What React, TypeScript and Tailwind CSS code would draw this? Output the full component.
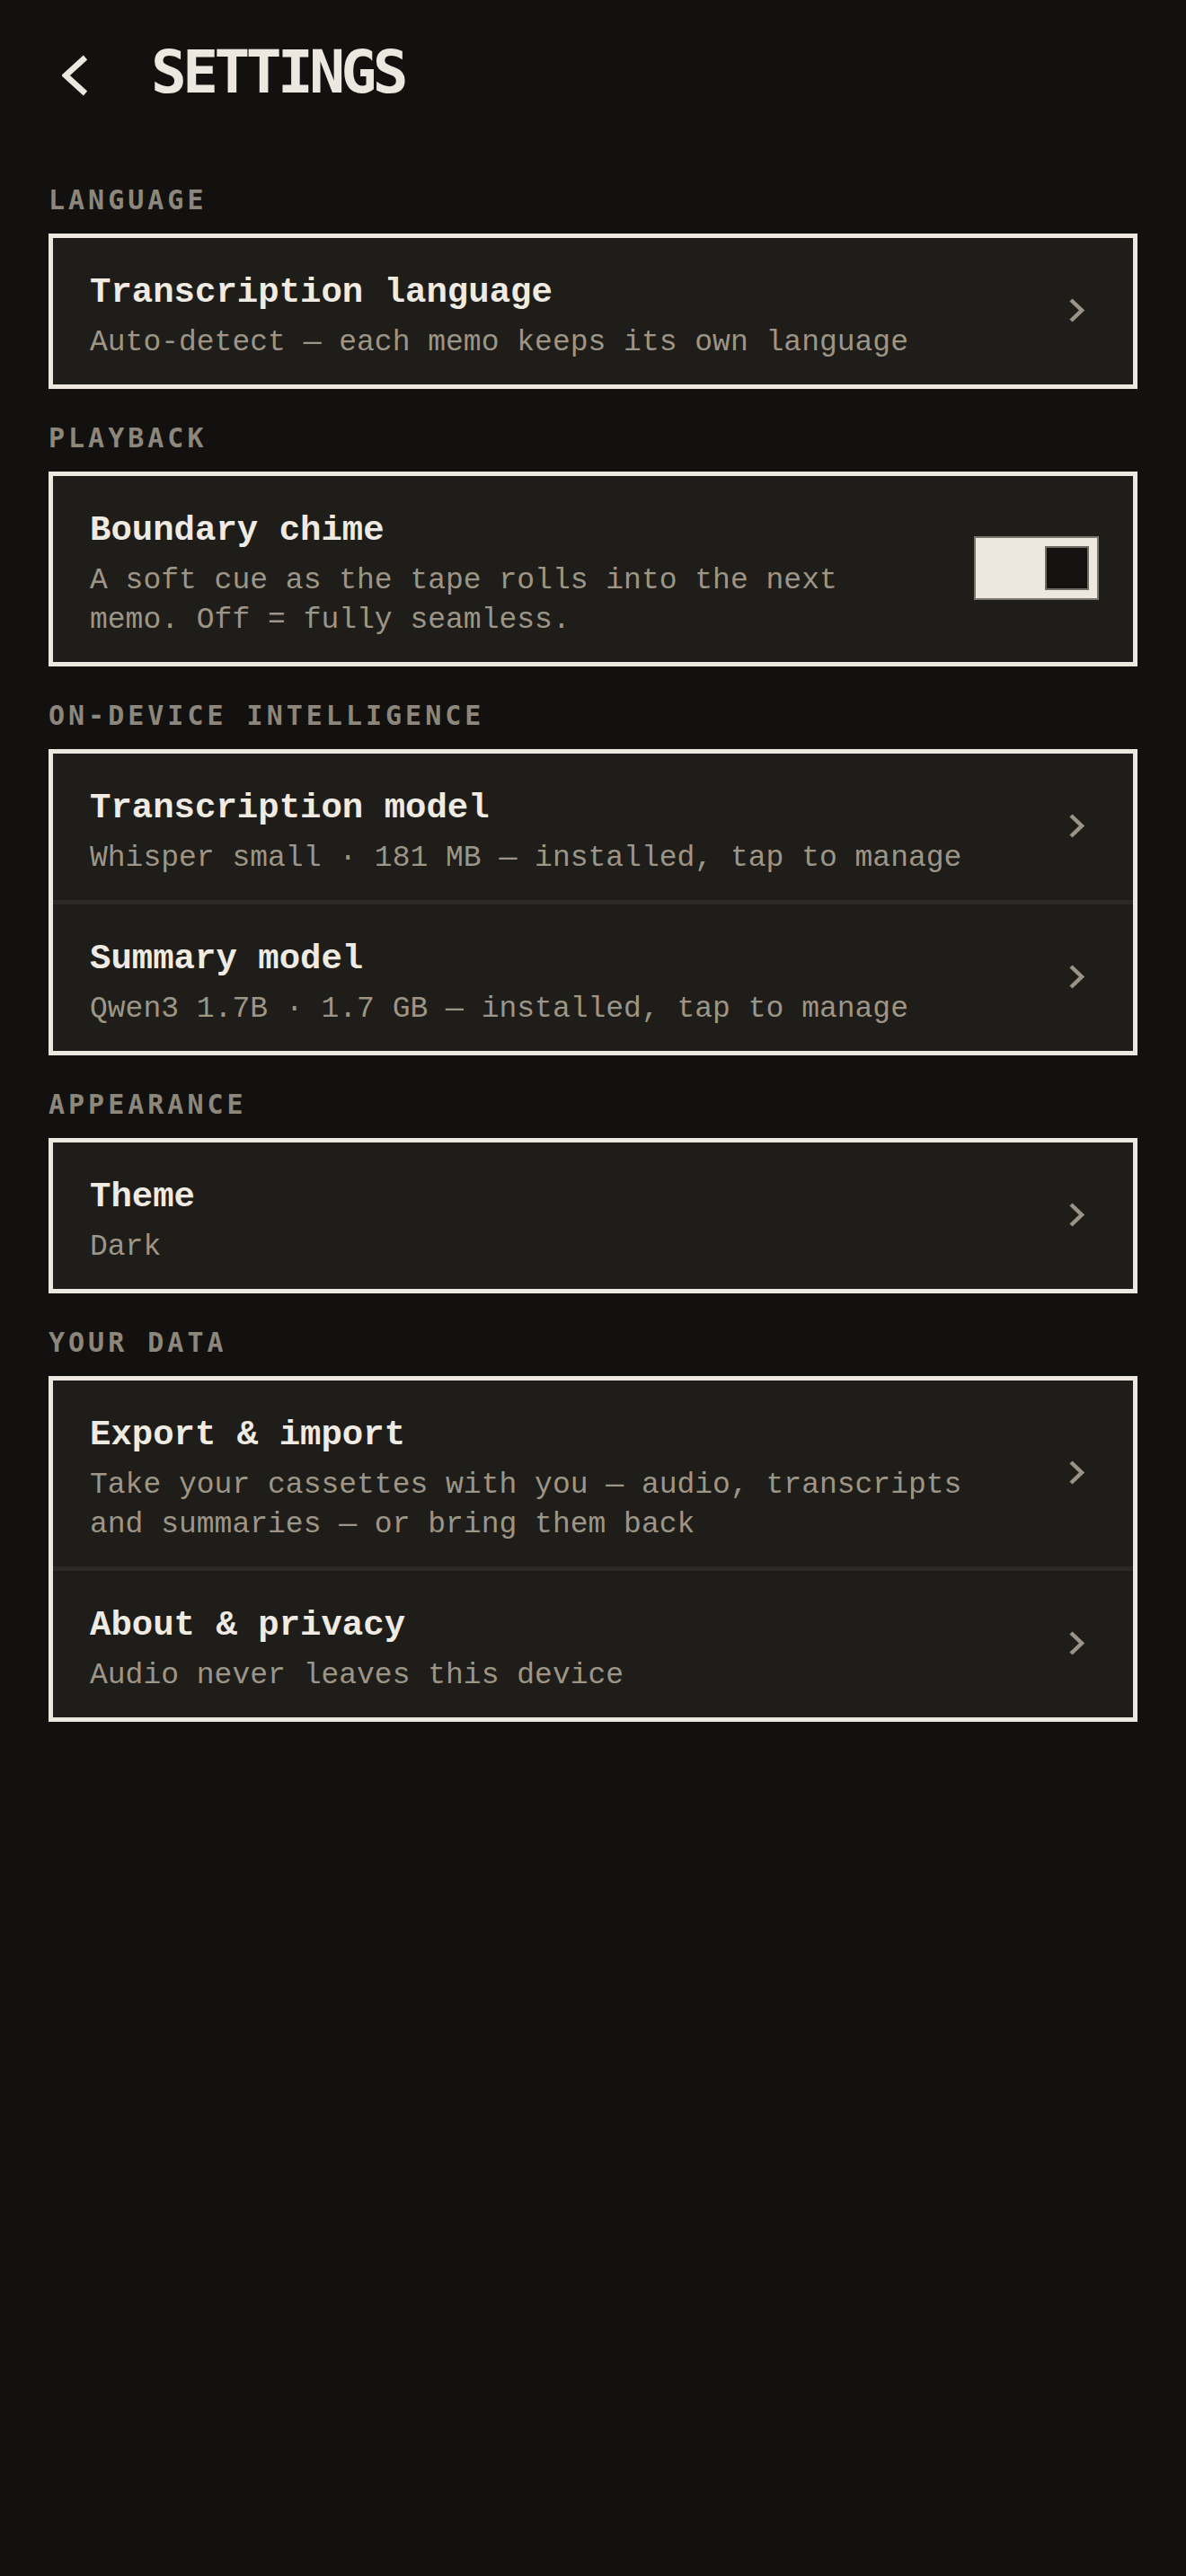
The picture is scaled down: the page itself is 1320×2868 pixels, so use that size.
import { ReactNode } from "react";

const mono = "font-['Liberation_Mono','DejaVu_Sans_Mono',monospace]";
const pixel = "font-['DejaVu_Sans_Mono','Liberation_Mono',monospace]";

const Chevron = () => (
  <svg width="40" height="40" viewBox="0 0 40 40" className="shrink-0" fill="none">
    <polyline points="9,8 21,19.5 9,31" stroke="#9a9386" strokeWidth="4.5" strokeLinejoin="miter" />
  </svg>
);

const Toggle = ({ on }: { on: boolean }) => (
  <div
    className={
      "shrink-0 w-[139px] h-[71px] border-2 border-[#7d786f] flex items-center px-[9px] " +
      (on ? "bg-[#ece8df] justify-end" : "bg-[#1e1d1a] justify-start")
    }
  >
    <div className="w-[49px] h-[49px] bg-[#131211] border-2 border-[#6f6b64]" />
  </div>
);

const Row = ({
  title,
  sub,
  right,
  wide = false,
}: {
  title: string;
  sub: string;
  right?: ReactNode;
  wide?: boolean;
}) => (
  <div className={"flex items-center pl-[41px] pr-[38px] pt-[37px] pb-[24px] " + (wide ? "gap-[60px]" : "gap-[48px]")}>
    <div className="flex-1 min-w-0">
      <div className={mono + " text-[39px] leading-[48px] font-bold text-[#efebe3]"}>{title}</div>
      <div className={mono + " mt-[10px] text-[33px] leading-[44px] text-[#9d9586]"}>{sub}</div>
    </div>
    <div className="shrink-0 -mt-[15px]">{right ?? <Chevron />}</div>
  </div>
);

const Section = ({ label, children }: { label: string; children: ReactNode }) => (
  <section>
    <h2 className={pixel + " text-[30px] leading-[30px] font-bold tracking-[4px] text-[#8d877b] mb-[22px]"}>
      {label}
    </h2>
    <div className="border-[5px] border-[#ece8df] bg-[#1e1d1a] divide-y-[5px] divide-[#2b2a26]">{children}</div>
  </section>
);

export default function App() {
  return (
    <div className="min-h-screen bg-[#121110] px-[54px] pt-[37px] pb-20">
      {/* Header */}
      <header className="h-[88px] flex items-center">
        <button className="pl-[15px] mt-[6px]">
          <svg width="30" height="46" viewBox="0 0 30 46" fill="none">
            <polyline points="26,3 4,23 26,43" stroke="#ece8df" strokeWidth="6.5" strokeLinejoin="miter" />
          </svg>
        </button>
        <h1 className={pixel + " ml-[69px] text-[66px] leading-[66px] font-bold tracking-[-4.5px] text-[#ece8df]"}>
          SETTINGS
        </h1>
      </header>

      <main className="mt-[83px] flex flex-col gap-[40px]">
        <Section label="LANGUAGE">
          <Row title="Transcription language" sub="Auto-detect — each memo keeps its own language" />
        </Section>

        <Section label="PLAYBACK">
          <Row
            title="Boundary chime"
            sub="A soft cue as the tape rolls into the next memo. Off = fully seamless."
            right={<Toggle on />}
            wide
          />
        </Section>

        <Section label="ON-DEVICE INTELLIGENCE">
          <Row title="Transcription model" sub="Whisper small · 181 MB — installed, tap to manage" />
          <Row title="Summary model" sub="Qwen3 1.7B · 1.7 GB — installed, tap to manage" />
        </Section>

        <Section label="APPEARANCE">
          <Row title="Theme" sub="Dark" />
        </Section>

        <Section label="YOUR DATA">
          <Row
            title="Export & import"
            sub="Take your cassettes with you — audio, transcripts and summaries — or bring them back"
          />
          <Row title="About & privacy" sub="Audio never leaves this device" />
        </Section>
      </main>
    </div>
  );
}
